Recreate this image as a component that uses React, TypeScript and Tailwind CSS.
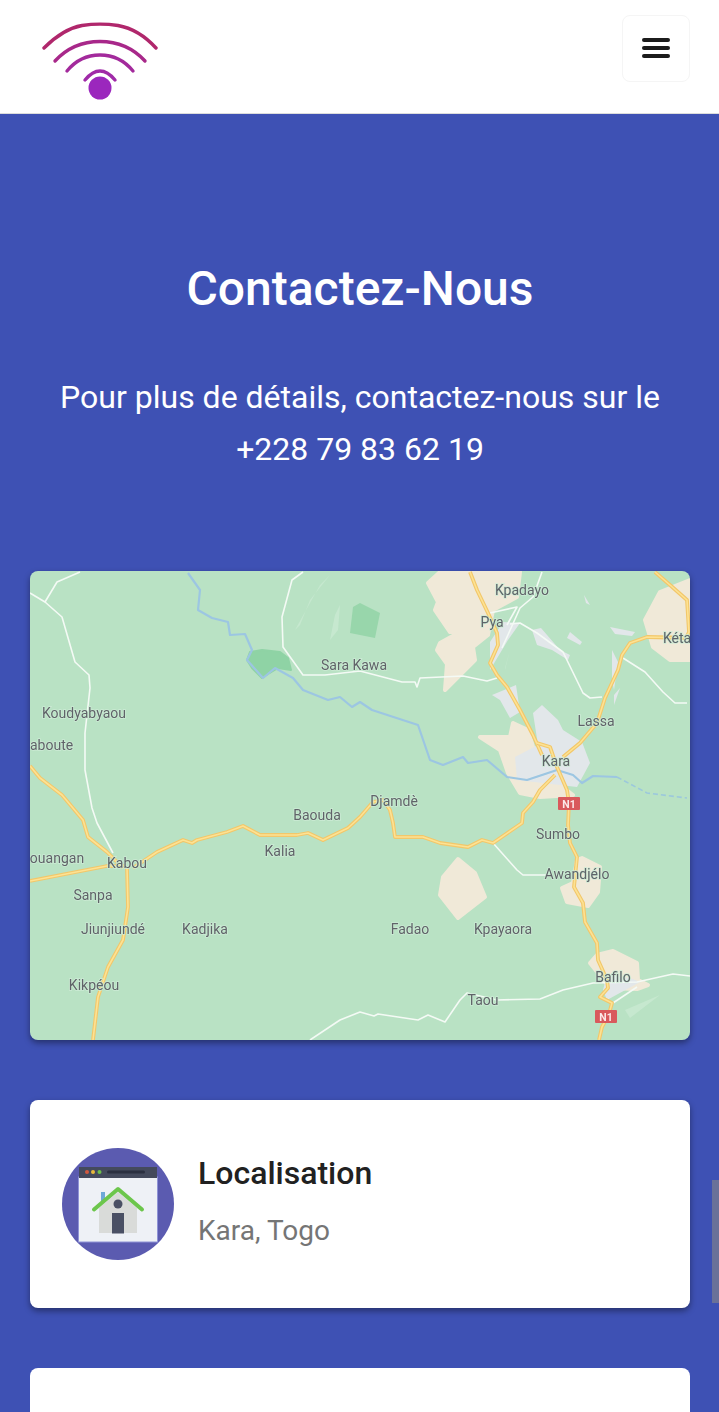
import React from "react";

const yellowRoads = [
  "M470 572L477 590L488 613L497 633L498 645L490 663L497 675L507 687L520 710L533 735L542 755",
  "M537 743L550 747L557 767L567 790L569 803L568 825L570 843L577 857L574 887L583 903L585 922L597 943L598 960L607 980L608 988L600 997L612 1003L609 1014L602 1027L599 1040",
  "M563 757L580 743L597 723L605 698L618 670L622 655L630 643L647 637L690 638",
  "M655 572L670 585L687 600L689 632L686 638",
  "M555 775L540 790L533 802L523 813L522 823L493 843L482 840L468 847L440 843L423 837L395 837L393 823L390 810L383 800L373 802L360 817L348 828L323 840L308 833L297 835L260 835L243 826L227 832L197 840L192 843L183 840L157 852L133 868",
  "M30 881L107 866L125 866",
  "M30 766L40 778L62 795L83 820L88 837L107 852L123 868",
  "M127 868L128 907L123 940L108 967L98 997L93 1040",
];

const whiteRoads = [
  "M80 572L57 582L45 602L30 593",
  "M45 602L62 617L75 662L89 675L90 688L85 733L85 770L92 808L97 823L113 853",
  "M303 572L292 580L282 617L283 647L303 675L325 675L360 671L402 682L415 682L417 687L420 678L463 676L487 681L497 678",
  "M310 1040L340 1020L360 1012L374 1016L378 1014L418 1020L428 1015L445 1022L460 1000L467 993L497 1000L540 999L563 990L593 983L637 982L673 974L690 976",
  "M637 987L613 1003",
  "M542 572L533 597L520 608L507 637L502 648",
  "M490 613L517 607L507 625",
  "M510 624L520 623L537 633L563 652L583 693L590 698L602 697",
  "M623 658L645 672L663 692L675 703L687 703",
  "M493 843L517 870L523 875L547 875",
];

const river =
  "M188 573L200 590L198 610L212 618L228 622L230 635L245 634L252 650L247 660L263 678L275 668L293 678L303 690L328 700L340 697L352 707L360 702L372 710L418 725L430 760L443 765L463 757L468 763L487 760L507 777L527 780L557 770L573 775L582 783L593 776L617 777";

const tan = [
  "M440 572L520 572L517 597L493 610L488 635L473 647L475 660L445 690L447 664L437 650L440 643L460 632L450 632L435 610L438 602L428 583Z",
  "M690 580L660 592L645 620L653 647L670 660L690 660Z",
  "M458 859L475 873L485 897L458 918L440 895L443 877Z",
  "M582 858L600 867L598 892L588 906L567 902L562 888L573 883L577 860Z",
  "M590 963L597 955L613 951L637 963L638 980L648 985L637 989L610 988L598 973Z",
  "M480 737L510 737L513 723L528 730L540 770L573 795L540 797L520 793L508 773L500 750Z",
];

const grey = [
  "M533 713L542 705L558 720L563 730L582 742L590 763L577 787L560 785L517 780L515 757L538 745Z",
  "M492 695L516 685L520 712L510 718L500 700Z",
  "M503 622L520 623L508 640L502 650L490 670L490 642Z",
  "M532 630L541 628L560 650L570 655L568 660L552 650L537 645Z",
  "M610 627L635 632L632 636L615 634Z",
  "M570 632L582 642L580 645L567 638Z",
  "M612 650L618 662L614 690L612 680Z",
  "M614 695L620 688L614 705Z",
  "M584 595L590 605L586 603Z",
  "M607 1000L640 982L630 978L607 975L603 990Z",
];

const lightGreen = [
  "M320 585L330 575L310 600L300 625L295 630Z",
  "M335 615L340 605L338 630L330 640Z",
  "M505 670L510 650L505 668Z",
  "M625 1010L660 995L630 1018Z",
];

const labels: [string, number, number][] = [
  ["Kpadayo", 522, 595],
  ["Pya", 492, 627],
  ["Sara Kawa", 354, 670],
  ["Koudyabyaou", 84, 718],
  ["Lassa", 596, 726],
  ["Kara", 556, 766],
  ["Djamdè", 394, 806],
  ["Baouda", 317, 820],
  ["Kalia", 280, 856],
  ["ouangan", 57, 863],
  ["Kabou", 127, 868],
  ["Sumbo", 558, 839],
  ["Awandjélo", 577, 879],
  ["Sanpa", 93, 900],
  ["Jiunjiundé", 113, 934],
  ["Kadjika", 205, 934],
  ["Fadao", 410, 934],
  ["Kpayaora", 503, 934],
  ["Kikpéou", 94, 990],
  ["Taou", 483, 1005],
  ["Bafilo", 613, 982],
];

function Logo() {
  return (
    <svg width="130" height="90" viewBox="35 12 130 90" className="block blur-[0.4px]" aria-hidden="true">
      <g fill="none" strokeWidth="3.4" strokeLinecap="round" strokeLinejoin="round">
        <path d="M44 48C56 36 68 28 82 25.500C92 24 108 24 118 25.500C132 28 145 36 156 48" stroke="#b0276c" />
        <path d="M55 61C67 48 82 41.500 100 41.500C118 41.500 133 48 145 61" stroke="#a8288a" />
        <path d="M67 71C76 60 88 55 100 55C112 55 124 60 133 71" stroke="#a32a9c" />
        <path d="M85 80C90 74 95 71 100 71C105 71 110 74 115 80" stroke="#a02aa8" />
      </g>
      <circle cx="100" cy="88" r="11.500" fill="#9b27bd" />
    </svg>
  );
}

function MapView() {
  return (
    <svg viewBox="30 571 660 469" className="block w-full h-[469px] blur-[0.4px]" role="img" aria-label="Carte">
      <rect x="30" y="571" width="660" height="469" fill="#b9e2c4" />
      {lightGreen.map((d, i) => (
        <path key={i} d={d} fill="#c6e8cf" />
      ))}
      <path d="M250 652L262 650L280 652L288 658L291 670L278 668L268 674L262 678L252 668L247 660Z" fill="#8fd3a5" stroke="#8fd3a5" strokeWidth="2" strokeLinejoin="round" />
      <path d="M353 607L360 603L380 613L375 638L350 633Z" fill="#98d6ab" />
      {tan.map((d, i) => (
        <path key={i} d={d} fill="#f0e9d8" stroke="#f0e9d8" strokeWidth="4" strokeLinejoin="round" />
      ))}
      {grey.map((d, i) => (
        <path key={i} d={d} fill="#e2e7ea" />
      ))}
      <path d={river} fill="none" stroke="#9cc6e2" strokeWidth="2.200" strokeLinejoin="round" />
      <path d="M617 777L647 793L687 798" fill="none" stroke="#9cc8dc" strokeWidth="1.600" strokeDasharray="5 3" />
      {whiteRoads.map((d, i) => (
        <path key={i} d={d} fill="none" stroke="#f4faf5" strokeWidth="1.600" strokeLinejoin="round" />
      ))}
      {yellowRoads.map((d, i) => (
        <g key={i}>
          <path d={d} fill="none" stroke="#f2c76a" strokeWidth="3.800" strokeLinejoin="round" />
          <path d={d} fill="none" stroke="#fde293" strokeWidth="1.600" strokeLinejoin="round" />
        </g>
      ))}
      <g fontFamily="Roboto, sans-serif" fontSize="14" fill="#5f6368" textAnchor="middle" stroke="#cdebd5" strokeWidth="1.500" paintOrder="stroke">
        {labels.map(([t, x, y]) => (
          <text key={t} x={x} y={y}>
            {t}
          </text>
        ))}
        <text x="30" y="750" textAnchor="start">
          aboute
        </text>
        <text x="663" y="643" textAnchor="start">
          Kéta
        </text>
      </g>
      {[
        [558, 797],
        [595, 1010],
      ].map(([x, y]) => (
        <g key={x}>
          <rect x={x} y={y} width="22" height="13" rx="1" fill="#d9595c" />
          <text x={x + 11} y={y + 10.500} fontFamily="Roboto, sans-serif" fontSize="10.500" fontWeight="700" fill="#fbe9e9" textAnchor="middle">
            N1
          </text>
        </g>
      ))}
    </svg>
  );
}

function HomeIcon() {
  return (
    <svg viewBox="62 1148 112 112" className="block w-28 h-28 shrink-0 blur-[0.3px]" aria-hidden="true">
      <circle cx="118" cy="1204" r="56" fill="#5b5bb0" />
      <rect x="78.500" y="1177" width="79" height="65" fill="#eef1f6" stroke="#8f93d6" strokeWidth="1" />
      <rect x="79" y="1167" width="78" height="11" fill="#444a5c" />
      <circle cx="87" cy="1172" r="2" fill="#d2593f" />
      <circle cx="93" cy="1172" r="2" fill="#e8b93a" />
      <circle cx="99.500" cy="1172" r="2" fill="#6cc04a" />
      <rect x="107" y="1170.500" width="38" height="3" rx="1.500" fill="#2b3040" />
      <rect x="101" y="1192" width="4" height="9" fill="#6ea9d8" />
      <path d="M99 1208L118 1192L137 1208V1233H99Z" fill="#d9dbd9" />
      <path d="M94 1209.500L118 1189L142 1209.500" fill="none" stroke="#6cc64c" strokeWidth="4" strokeLinecap="round" strokeLinejoin="round" />
      <circle cx="118" cy="1204" r="4.500" fill="#4a5064" />
      <rect x="112" y="1213" width="12" height="20.500" fill="#4a5064" />
    </svg>
  );
}

function Bars() {
  return (
    <span className="flex flex-col gap-1 -mt-px">
      <span className="block w-7 h-1 rounded-full bg-[#1c1c1c]" />
      <span className="block w-7 h-1 rounded-full bg-[#1c1c1c]" />
      <span className="block w-7 h-1 rounded-full bg-[#1c1c1c]" />
    </span>
  );
}

export default function App() {
  return (
    <div className="relative h-[1412px] overflow-hidden bg-[#3e51b4] font-['Roboto',sans-serif]">
      <header className="flex items-center justify-between h-[114px] pl-[35px] pr-[29px] bg-white border-b border-[#dcdcdc]">
        <Logo />
        <button className="flex items-center justify-center w-[68px] h-[67px] -mt-[16px] rounded-lg border border-[#f5f5f5] bg-white">
          <Bars />
        </button>
      </header>

      <main className="pl-[30px] pr-[29px]">
        <section className="flex flex-col items-center pt-[145px] text-white text-center">
          <h1 className="text-[48px] leading-[60px] font-medium">Contactez-Nous</h1>
          <p className="mt-[52px] text-[32px] leading-[52px] font-normal">
            Pour plus de détails, contactez-nous sur le
            <br />
            +228 79 83 62 19
          </p>
        </section>

        <div className="mt-[96px] overflow-hidden rounded-lg shadow-[0_3px_6px_rgba(0,0,0,0.4)]">
          <MapView />
        </div>

        <div className="mt-[60px] flex items-center gap-6 h-[208px] pl-8 rounded-lg bg-white shadow-[0_3px_6px_rgba(0,0,0,0.4)]">
          <HomeIcon />
          <div className="flex flex-col -mt-[4px]">
            <h2 className="text-[32px] leading-10 font-medium text-[#212121]">Localisation</h2>
            <p className="mt-[18px] text-[28px] leading-10 text-[#757575]">Kara, Togo</p>
          </div>
        </div>

        <div className="mt-[60px] h-[208px] rounded-lg bg-white" />
      </main>

      <div className="absolute right-0 top-[1180px] w-[7px] h-[123px] bg-[#6a7199]" />
    </div>
  );
}
